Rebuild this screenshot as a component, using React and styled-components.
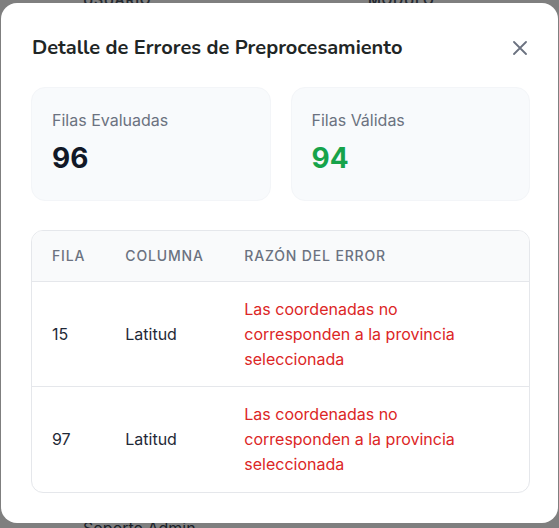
import React from "react";
import styled, { createGlobalStyle } from "styled-components";

const GlobalStyle = createGlobalStyle`
  html, body { margin: 0; padding: 0; }
  body {
    font-family: Inter, "Noto Sans", sans-serif;
    background: #ffffff;
    color: #1f2937;
  }
  * { box-sizing: border-box; }
`;

const BgPage = styled.div`
  height: 100vh;
  display: flex;
  flex-direction: column;
  justify-content: space-between;
  overflow: hidden;
`;

const BgHeader = styled.div`
  display: flex;
  margin-top: -10px;
  padding-left: 83px;
  font-size: 14px;
  line-height: 20px;
  font-weight: 600;
  letter-spacing: 0.05em;
  text-transform: uppercase;
  color: #4b5563;
`;

const BgCell = styled.div`
  width: ${(p) => p.$w}px;
`;

const BgRow = styled.div`
  margin-bottom: -12px;
  padding-left: 83px;
  font-size: 16px;
  line-height: 24px;
  color: #374151;
`;

const Overlay = styled.div`
  position: fixed;
  inset: 0;
  background: rgba(0, 0, 0, 0.5);
  display: flex;
  align-items: flex-start;
  padding: 3px 0 0 1px;
`;

const Modal = styled.div`
  width: 557px;
  height: 520px;
  background: #ffffff;
  border-radius: 16px;
  padding: 31px 28px 0 30px;
  display: flex;
  flex-direction: column;
`;

const Header = styled.div`
  display: flex;
  align-items: center;
  justify-content: space-between;
  padding-left: 1px;
`;

const Title = styled.h2`
  margin: 0;
  font-family: Nunito, Lato, "Noto Sans", sans-serif;
  font-size: 20px;
  line-height: 28px;
  font-weight: 700;
  color: #1f2626;
`;

const CloseButton = styled.button`
  width: 20px;
  height: 20px;
  padding: 0;
  border: none;
  background: transparent;
  display: flex;
  align-items: center;
  justify-content: center;
  color: #6b7280;
  cursor: pointer;
`;

const Stats = styled.div`
  margin-top: 25px;
  display: grid;
  grid-template-columns: 1fr 1fr;
  gap: 20px;
`;

const StatCard = styled.div`
  background: #f8fafc;
  border: 1px solid #f3f5f8;
  border-radius: 14px;
  padding: 20px 20px 24px;
`;

const StatLabel = styled.div`
  font-size: 16px;
  line-height: 24px;
  color: #6b7280;
`;

const StatValue = styled.div`
  margin-top: 8px;
  font-size: 28px;
  line-height: 36px;
  font-weight: 700;
  color: ${(p) => (p.$tone === "green" ? "#16a34a" : "#111827")};
`;

const TableWrap = styled.div`
  margin-top: 29px;
  border: 1px solid #e5e7eb;
  border-radius: 12px;
  overflow: hidden;
`;

const Table = styled.table`
  width: 100%;
  border-collapse: collapse;
`;

const Th = styled.th`
  text-align: left;
  padding: 15px 20px;
  background: #f9fafb;
  border-bottom: 1px solid #e5e7eb;
  font-size: 14px;
  line-height: 20px;
  font-weight: 500;
  letter-spacing: 0.06em;
  text-transform: uppercase;
  color: #6b7280;
  width: ${(p) => (p.$w ? `${p.$w}px` : "auto")};
`;

const Td = styled.td`
  padding: 15px 20px;
  font-size: 16px;
  line-height: 24.75px;
  vertical-align: middle;
  color: ${(p) => (p.$error ? "#dc2626" : "#1f2937")};
`;

const ErrorText = styled.div`
  max-width: 250px;
`;

const Tr = styled.tr`
  & + & td {
    border-top: 1px solid #e5e7eb;
  }
`;

const XIcon = () => (
  <svg width="14" height="14" viewBox="0 0 14 14" fill="none">
    <path d="M1 1L13 13M13 1L1 13" stroke="currentColor" strokeWidth="1.8" strokeLinecap="round" />
  </svg>
);

const rows = [
  { fila: 15, columna: "Latitud", razon: "Las coordenadas no corresponden a la provincia seleccionada" },
  { fila: 97, columna: "Latitud", razon: "Las coordenadas no corresponden a la provincia seleccionada" },
];

export default function App() {
  return (
    <>
      <GlobalStyle />
      <BgPage>
        <BgHeader>
          <BgCell $w={285}>Usuario</BgCell>
          <BgCell $w={150}>Módulo</BgCell>
        </BgHeader>
        <BgRow>Soporte Admin</BgRow>
      </BgPage>
      <Overlay>
        <Modal>
          <Header>
            <Title>Detalle de Errores de Preprocesamiento</Title>
            <CloseButton aria-label="Cerrar">
              <XIcon />
            </CloseButton>
          </Header>
          <Stats>
            <StatCard>
              <StatLabel>Filas Evaluadas</StatLabel>
              <StatValue>96</StatValue>
            </StatCard>
            <StatCard>
              <StatLabel>Filas Válidas</StatLabel>
              <StatValue $tone="green">94</StatValue>
            </StatCard>
          </Stats>
          <TableWrap>
            <Table>
              <thead>
                <tr>
                  <Th $w={73}>Fila</Th>
                  <Th $w={119}>Columna</Th>
                  <Th>Razón del Error</Th>
                </tr>
              </thead>
              <tbody>
                {rows.map((r) => (
                  <Tr key={r.fila}>
                    <Td>{r.fila}</Td>
                    <Td>{r.columna}</Td>
                    <Td $error>
                      <ErrorText>{r.razon}</ErrorText>
                    </Td>
                  </Tr>
                ))}
              </tbody>
            </Table>
          </TableWrap>
        </Modal>
      </Overlay>
    </>
  );
}
